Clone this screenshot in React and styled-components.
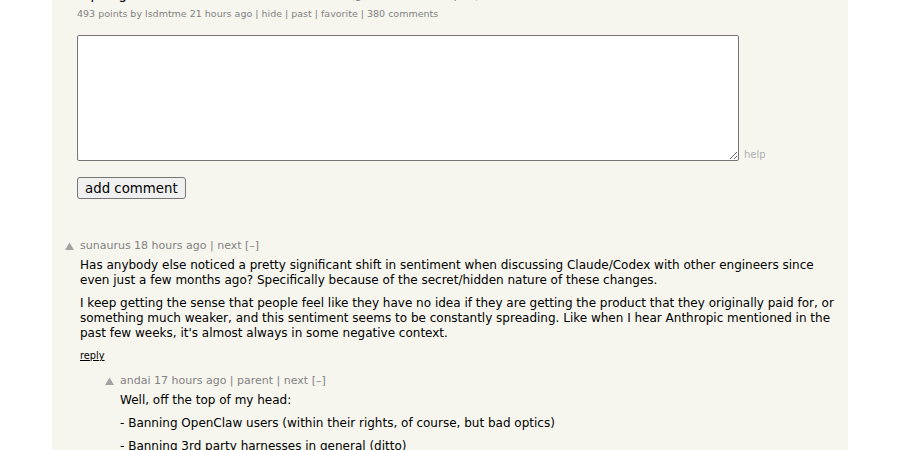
import React from "react";
import styled, { createGlobalStyle } from "styled-components";

const Global = createGlobalStyle`
  html, body { margin: 0; padding: 0; background: #ffffff; }
  body { font-family: "DejaVu Sans", Verdana, Geneva, sans-serif; }
`;

const Page = styled.div`
  width: 796px;
  margin: 0 auto;
  background: #f6f6ef;
  min-height: 450px;
  overflow: hidden;
`;

const ItemHead = styled.div`
  padding-left: 28px;
`;

const TitleRow = styled.div`
  margin-top: -12px;
  height: 14px;
  line-height: 14px;
  font-size: 13.33px;
  color: #000;
  white-space: nowrap;
`;

const Site = styled.span`
  font-size: 10.67px;
  color: #828282;
  margin-left: 4px;
`;

const SubText = styled.div`
  margin-top: 6px;
  margin-left: -3px;
  font-size: 9.5px;
  line-height: 12px;
  color: #828282;
`;

const Form = styled.div`
  padding-left: 25px;
`;

const AreaRow = styled.div`
  margin-top: 15px;
  display: flex;
  align-items: flex-end;
`;

const TextArea = styled.textarea`
  box-sizing: border-box;
  width: 662px;
  height: 126px;
  border: 1px solid #767676;
  border-radius: 2px;
  background: #fff;
  margin: 0;
  padding: 2px;
  font-family: "DejaVu Sans Mono", monospace;
  font-size: 13px;
`;

const Help = styled.span`
  margin-left: 5px;
  margin-bottom: 0px;
  font-size: 10px;
  line-height: 12px;
  color: #afafaf;
`;

const Button = styled.button`
  margin-top: 16px;
  box-sizing: border-box;
  height: 22px;
  padding: 0 7px;
  font-family: "DejaVu Sans", Verdana, sans-serif;
  font-size: 13.33px;
  color: #000;
  background: #f0f0f0;
  border: 1px solid #767676;
  border-radius: 3px;
`;

const Comments = styled.div`
  margin-top: 41px;
`;

const Comment = styled.div`
  padding-left: ${(p) => 13 + p.$indent * 40}px;
  margin-bottom: 13px;
`;

const Row = styled.div`
  display: flex;
  align-items: flex-start;
`;

const Vote = styled.div`
  width: 15px;
  flex: none;
  height: 12px;
  display: flex;
  align-items: center;
`;

const Body = styled.div`
  flex: 1;
  padding-right: 8px;
`;

const Head = styled.div`
  font-size: 11px;
  line-height: 12px;
  color: #828282;
`;

const Text = styled.div`
  margin-top: 6px;
  font-size: 12px;
  line-height: 15px;
  color: #000;
`;

const Para = styled.p`
  margin: 0;
  & + & { margin-top: 8px; }
`;

const Reply = styled.div`
  margin-top: 9px;
  font-size: 9.8px;
  line-height: 12px;
  color: #000;
  text-decoration: underline;
`;

const Arrow = () => (
  <svg width="9" height="8" viewBox="0 0 9 8">
    <polygon points="4.5,0.5 9,8 0,8" fill="#a3a3a3" />
  </svg>
);

const comments = [
  {
    indent: 0,
    head: "sunaurus 18 hours ago | next [–]",
    paras: [
      "Has anybody else noticed a pretty significant shift in sentiment when discussing Claude/Codex with other engineers since even just a few months ago? Specifically because of the secret/hidden nature of these changes.",
      "I keep getting the sense that people feel like they have no idea if they are getting the product that they originally paid for, or something much weaker, and this sentiment seems to be constantly spreading. Like when I hear Anthropic mentioned in the past few weeks, it's almost always in some negative context.",
    ],
    reply: true,
  },
  {
    indent: 1,
    head: "andai 17 hours ago | parent | next [–]",
    paras: [
      "Well, off the top of my head:",
      "- Banning OpenClaw users (within their rights, of course, but bad optics)",
      "- Banning 3rd party harnesses in general (ditto)",
      "- Cache TTL changes without notice",
    ],
    reply: true,
  },
];

export default function App() {
  return (
    <>
      <Global />
      <Page>
        <ItemHead>
          <TitleRow>
            Opus got worse over the last few weeks
            <Site>(github.com/anthropics)</Site>
          </TitleRow>
          <SubText>
            493 points by lsdmtme 21 hours ago | hide | past | favorite | 380 comments
          </SubText>
        </ItemHead>
        <Form>
          <AreaRow>
            <TextArea />
            <Help>help</Help>
          </AreaRow>
          <Button>add comment</Button>
        </Form>
        <Comments>
          {comments.map((c, i) => (
            <Comment key={i} $indent={c.indent}>
              <Row>
                <Vote>
                  <Arrow />
                </Vote>
                <Body>
                  <Head>{c.head}</Head>
                  <Text>
                    {c.paras.map((p, j) => (
                      <Para key={j}>{p}</Para>
                    ))}
                  </Text>
                  {c.reply && <Reply>reply</Reply>}
                </Body>
              </Row>
            </Comment>
          ))}
        </Comments>
      </Page>
    </>
  );
}
